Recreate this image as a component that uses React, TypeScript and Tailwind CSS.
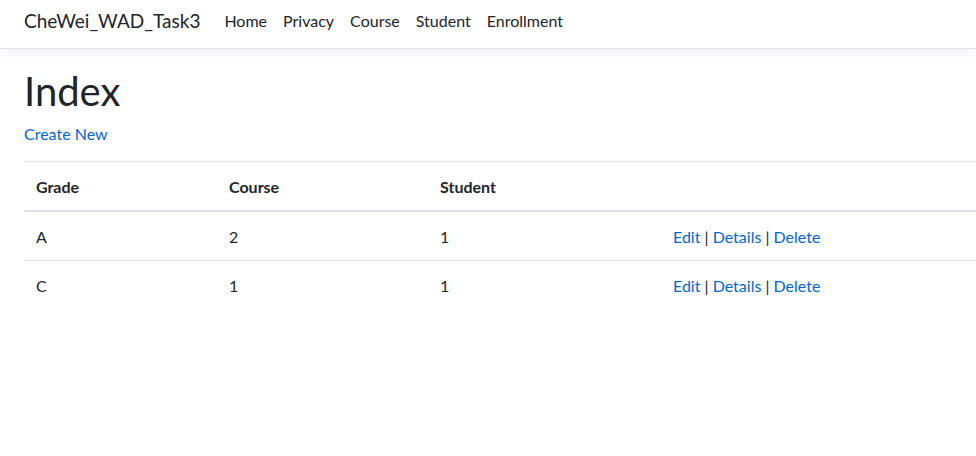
import React from "react";

const rows = [
  { grade: "A", course: "2", student: "1" },
  { grade: "C", course: "1", student: "1" },
];

const cell = "pt-[13px] pb-[11px] px-3";

export default function App() {
  return (
    <div className="min-h-[456px] bg-white text-[#212529]" style={{ fontFamily: '"Segoe UI", Lato, "Liberation Sans", sans-serif' }}>
      <header className="h-[49px] border-b border-[#dee2e6] bg-white shadow-[0_4px_12px_rgba(0,0,0,0.05)]">
        <nav className="flex h-12 items-center pb-[6px] pl-6">
          <a className="mr-4 text-[19px] leading-[30px] text-[#212529]">CheWei_WAD_Task3</a>
          <ul className="flex">
            {["Home", "Privacy", "Course", "Student", "Enrollment"].map((t) => (
              <li key={t}>
                <a className="block px-2 text-[16px] leading-6 text-[#212529]">{t}</a>
              </li>
            ))}
          </ul>
        </nav>
      </header>
      <main className="pl-6 pt-4">
        <h1 className="mb-[6px] pt-[2px] text-[40px] font-normal leading-[48px]">Index</h1>
        <p className="mb-[15px] pt-[1px] text-[16px] leading-6">
          <a className="text-[#0366d6]">Create New</a>
        </p>
        <table className="w-full border-collapse text-left text-[16px] leading-6">
          <thead>
            <tr>
              <th className={`w-[193px] border-t border-b-2 border-[#dee2e6] font-bold ${cell}`}>Grade</th>
              <th className={`w-[211px] border-t border-b-2 border-[#dee2e6] font-bold ${cell}`}>Course</th>
              <th className={`w-[233px] border-t border-b-2 border-[#dee2e6] font-bold ${cell}`}>Student</th>
              <th className={`border-t border-b-2 border-[#dee2e6] ${cell}`}></th>
            </tr>
          </thead>
          <tbody>
            {rows.map((r, i) => (
              <tr key={i}>
                <td className={`${i > 0 ? "border-t border-[#dee2e6]" : ""} ${cell}`}>{r.grade}</td>
                <td className={`${i > 0 ? "border-t border-[#dee2e6]" : ""} ${cell}`}>{r.course}</td>
                <td className={`${i > 0 ? "border-t border-[#dee2e6]" : ""} ${cell}`}>{r.student}</td>
                <td className={`${i > 0 ? "border-t border-[#dee2e6]" : ""} ${cell}`}>
                  <a className="text-[#0366d6]">Edit</a> | <a className="text-[#0366d6]">Details</a> |{" "}
                  <a className="text-[#0366d6]">Delete</a>
                </td>
              </tr>
            ))}
          </tbody>
        </table>
      </main>
    </div>
  );
}
